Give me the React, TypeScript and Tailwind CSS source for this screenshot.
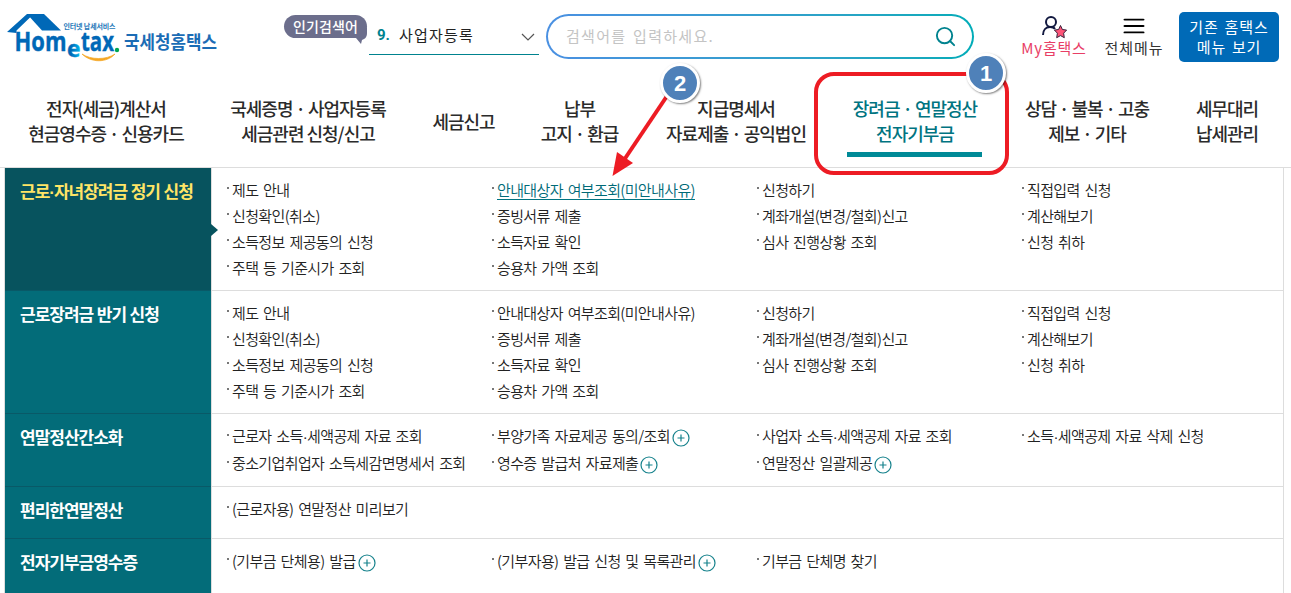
import { Menu, Search } from "lucide-react";

type MenuLink = { label: string; popup?: boolean; current?: boolean };
type MenuSection = { title: string; active?: boolean; size: string; lineHeight: string; columns: MenuLink[][] };

const navItems = [
  { lines: ["전자(세금)계산서", "현금영수증 · 신용카드"], width: "w-[212px]" },
  { lines: ["국세증명 · 사업자등록", "세금관련 신청/신고"], width: "w-48" },
  { lines: ["세금신고"], width: "w-[119px]" },
  { lines: ["납부", "고지 · 환급"], width: "w-[113px]" },
  { lines: ["지급명세서", "자료제출 · 공익법인"], width: "w-[200px]" },
  { lines: ["장려금 · 연말정산", "전자기부금"], width: "w-[158px]", active: true },
  { lines: ["상담 · 불복 · 고충", "제보 · 기타"], width: "w-[186px]" },
  { lines: ["세무대리", "납세관리"], width: "w-[94px]" },
];

const benefitColumns = (current: boolean): MenuLink[][] => [
  [
    { label: "제도 안내" },
    { label: "신청확인(취소)" },
    { label: "소득정보 제공동의 신청" },
    { label: "주택 등 기준시가 조회" },
  ],
  [
    { label: "안내대상자 여부조회(미안내사유)", current },
    { label: "증빙서류 제출" },
    { label: "소득자료 확인" },
    { label: "승용차 가액 조회" },
  ],
  [{ label: "신청하기" }, { label: "계좌개설(변경/철회)신고" }, { label: "심사 진행상황 조회" }],
  [{ label: "직접입력 신청" }, { label: "계산해보기" }, { label: "신청 취하" }],
];

const sections: MenuSection[] = [
  {
    title: "근로·자녀장려금 정기 신청",
    active: true,
    size: "h-[123px]",
    lineHeight: "h-[26px]",
    columns: benefitColumns(true),
  },
  { title: "근로장려금 반기 신청", size: "h-[123px]", lineHeight: "h-[26px]", columns: benefitColumns(false) },
  {
    title: "연말정산간소화",
    size: "h-[73px]",
    lineHeight: "h-[27px]",
    columns: [
      [{ label: "근로자 소득·세액공제 자료 조회" }, { label: "중소기업취업자 소득세감면명세서 조회" }],
      [
        { label: "부양가족 자료제공 동의/조회", popup: true },
        { label: "영수증 발급처 자료제출", popup: true },
      ],
      [{ label: "사업자 소득·세액공제 자료 조회" }, { label: "연말정산 일괄제공", popup: true }],
      [{ label: "소득·세액공제 자료 삭제 신청" }],
    ],
  },
  {
    title: "편리한연말정산",
    size: "h-[52px]",
    lineHeight: "h-[26px]",
    columns: [[{ label: "(근로자용) 연말정산 미리보기" }], [], [], []],
  },
  {
    title: "전자기부금영수증",
    size: "h-[60px]",
    lineHeight: "h-[26px]",
    columns: [
      [{ label: "(기부금 단체용) 발급", popup: true }],
      [{ label: "(기부자용) 발급 신청 및 목록관리", popup: true }],
      [{ label: "기부금 단체명 찾기" }],
      [],
    ],
  },
];

export default function App() {
  return (
    <div className="relative flex h-[593px] w-[1291px] flex-col overflow-hidden bg-white font-['Noto_Sans_CJK_KR',sans-serif] text-[#333]">
      <Header />
      <MainNav />
      <main className="mr-[7px] ml-1 flex min-h-0 flex-1 flex-col border-x border-[#ddd]">
        {sections.map((section) => (
          <SectionRow key={section.title} section={section} />
        ))}
      </main>
      <Annotations />
    </div>
  );
}

const Header = () => (
  <header className="flex h-[84px] shrink-0 items-start">
    <Logo />
    <div className="relative mt-[15px] ml-[62px] flex h-[23px] w-[83px] items-center justify-center rounded-full bg-[#6c6e8c] text-[14px] font-medium tracking-[0.1px] text-white">
      인기검색어
      <svg className="absolute right-0 bottom-[-6px]" width="14" height="17" viewBox="0 0 14 17">
        <path d="M14 0v6c0 4-2 6-5 7l-1 4-5-6z" fill="#6c6e8c" />
      </svg>
    </div>
    <div className="mt-5 ml-0.5 flex h-[35px] w-[170px] items-center border-b border-[#00838f] pr-1 pb-1 pl-2">
      <b className="font-[Roboto,sans-serif] text-[15px] text-[#00838f]">9.</b>
      <span className="ml-[9px] text-[15px] tracking-[1.2px] text-[#222]">사업자등록</span>
      <svg className="mt-1 ml-auto" width="14" height="9" viewBox="0 0 14 9" fill="none" stroke="#555" strokeWidth="1.2">
        <path d="M1 1l6 6 6-6" />
      </svg>
    </div>
    <div className="mt-3.5 ml-[7px] h-[45px] w-[428px] rounded-full bg-linear-to-r from-[#4a90e2] to-[#00acb8] p-[2px]">
      <div className="flex h-full items-center justify-between rounded-full bg-white pr-[15px] pl-[18px]">
        <span className="text-[15px] tracking-[1.3px] text-[#c4c4c4] [word-spacing:2px]">검색어를 입력하세요.</span>
        <Search className="text-[#00838f]" size={23} strokeWidth={2} />
      </div>
    </div>
    <div className="mt-[15px] ml-[46px] flex w-[68px] flex-col items-center text-[#e83e66]">
      <svg width="28" height="24" viewBox="0 0 28 24">
        <g fill="none" stroke="#11183f" strokeWidth="2">
          <circle cx="11" cy="7" r="5" />
          <path d="M3 20c0-5 3-8 7-8 2 0 4 .5 5 2" />
        </g>
        <path
          d="M20.500 10.500l1.900 4 4.200.6-3 3.100.7 4.500-3.800-2.100-3.800 2.100.7-4.500-3-3.100 4.200-.6z"
          fill="#ff5478"
          stroke="#342039"
          strokeWidth="1"
          strokeLinejoin="round"
        />
      </svg>
      <span className="-mt-0.5 text-[15px] leading-[21px] tracking-[0.8px] whitespace-nowrap">My홈택스</span>
    </div>
    <div className="mt-[15px] ml-[11px] flex w-[70px] flex-col items-center">
      <Menu className="h-[22px] w-7 text-black" preserveAspectRatio="none" strokeWidth={2} />
      <span className="text-[15px] leading-[21px] tracking-[1px] whitespace-nowrap">전체메뉴</span>
    </div>
    <button className="mt-3 ml-[10px] h-[50px] w-[100px] rounded-[5px] bg-[#006ab7] pb-px text-[15px] leading-5 tracking-[0.9px] text-white [word-spacing:1.5px]">
      기존 홈택스
      <br />
      메뉴 보기
    </button>
  </header>
);

const Logo = () => (
  <svg className="ml-[7px] shrink-0" width="215" height="70" viewBox="7 0 215 70" fontFamily="Noto Sans CJK KR, sans-serif">
    <defs>
      <linearGradient id="logo-e">
        <stop offset="0.3" stopColor="#0068b7" />
        <stop offset="1" stopColor="#00b9ef" />
      </linearGradient>
    </defs>
    <path d="M7 32L27 14h3v3.500L16.500 30.500V33z" fill="#0068b7" />
    <path d="M27 14h17l17 16.500H42z" fill="#0068b7" />
    <text x="63.500" y="29" fontSize="7" fontWeight="700" fill="#2578b9" textLength="52">
      인터넷 납세서비스
    </text>
    <g fontFamily="Open Sans, sans-serif" fontWeight="700" fill="#0068b7" stroke="#0068b7" strokeWidth=".4" fontSize="27">
      <text x="14.500" y="51" textLength="52" lengthAdjust="spacingAndGlyphs">
        Hom
      </text>
      <text x="67" y="56.500" fontSize="23" fill="url(#logo-e)" stroke="url(#logo-e)" textLength="13.500" lengthAdjust="spacingAndGlyphs">
        e
      </text>
      <text x="81" y="51" textLength="33" lengthAdjust="spacingAndGlyphs">
        tax
      </text>
    </g>
    <circle cx="117" cy="50" r="2.200" fill="#00a651" />
    <path d="M82 54c9 9 25 9 33 0-9 6-24 6-33 0z" fill="#f5a623" stroke="#f5a623" strokeWidth=".7" />
    <text x="124" y="49" fontSize="18" fontWeight="700" fill="#1b6cb5" textLength="93" lengthAdjust="spacingAndGlyphs">
      국세청홈택스
    </text>
  </svg>
);

const MainNav = () => (
  <nav className="flex h-[84px] shrink-0 border-b border-[#ddd]">
    {navItems.map(({ lines, width, active }) => (
      <a
        key={lines[0]}
        className={`${width} ${
          active ? "text-[#007481]" : "text-[#2b2b2b]"
        } flex shrink-0 flex-col items-center pt-3 text-center text-[18px] leading-[25px] font-medium tracking-[-1px] whitespace-nowrap`}
      >
        <span className="flex h-[50px] flex-col justify-center">
          {lines.map((line) => (
            <span key={line}>{line}</span>
          ))}
        </span>
        {active && <span className="mt-1.5 mr-0.5 h-[5px] w-[135px] bg-[#008a97]" />}
      </a>
    ))}
  </nav>
);

const SectionRow = ({ section }: { section: MenuSection }) => (
  <section className={`${section.size} flex shrink-0`}>
    <h2
      className={`${
        section.active ? "bg-[#07535e] text-[#ffe566]" : "bg-[#036c79] text-white"
      } relative w-[206px] shrink-0 border-b border-[#095967] pt-2.5 pl-[15px] text-[17px] leading-[26px] font-bold tracking-[-1px] whitespace-nowrap [word-spacing:0.7px]`}
    >
      <TightDot text={section.title} />
      {section.active && (
        <span className="absolute top-14 -right-[7px] h-3 w-[7px] bg-[#07535e] [clip-path:polygon(0_0,100%_50%,0_100%)]" />
      )}
    </h2>
    <div className="flex min-w-0 flex-1 border-b border-l border-[#ddd] pt-[9px] pl-[15px]">
      {section.columns.map((links, i) => (
        <ul
          key={i}
          className="w-[265px] shrink-0 text-[15px] font-[350] tracking-[-0.62px] whitespace-nowrap text-[#222] [word-spacing:2px] last:w-[240px]"
        >
          {links.map((link) => (
            <li key={link.label} className={`${section.lineHeight} flex items-center`}>
              <span className="mr-[3px] mb-1 h-0.5 w-0.5 bg-[#777]" />
              <a className={link.current ? "border-b border-[#007481] leading-[19px] text-[#006a77]" : ""}>
                <TightDot text={link.label} />
              </a>
              {link.popup && <PopupIcon />}
            </li>
          ))}
        </ul>
      ))}
    </div>
  </section>
);

// The CJK middle dot is set too wide for compound words like 소득·세액, so take the Latin one
const TightDot = ({ text }: { text: string }) => {
  const [head, tail] = text.split("·");
  if (!tail) return <>{text}</>;
  return (
    <>
      {head}
      <span className="font-['Liberation_Sans',sans-serif] leading-none">·</span>
      {tail}
    </>
  );
};

const PopupIcon = () => (
  <svg className="mt-[3px] ml-0.5" width="18" height="18" viewBox="0 0 18 18" fill="none" stroke="#16828c" strokeWidth="1.2">
    <circle cx="9" cy="9" r="8" />
    <path d="M9 5.5v7M5.5 9h7" />
  </svg>
);

// Numbered steps and the arrow laid over the menu
const Annotations = () => (
  <>
    <div className="absolute top-[72px] left-[814px] h-[103px] w-[195px] rounded-[20px] border-4 border-[#ed1c24]" />
    <svg className="absolute top-[90px] left-[605px]" width="70" height="90" viewBox="605 90 70 90">
      <path d="M667 96L624 160" stroke="#ed1c24" strokeWidth="4" />
      <path d="M612.5 176l4.5-24 16 11z" fill="#ed1c24" />
    </svg>
    <StepBadge step={1} position="top-[53px] left-[966px]" />
    <StepBadge step={2} position="top-[63px] left-[660px]" />
  </>
);

const StepBadge = ({ step, position }: { step: number; position: string }) => (
  <div
    className={`${position} absolute flex h-10 w-10 items-center justify-center rounded-full border-[3px] border-white bg-[#4f81b9] font-['Liberation_Sans',sans-serif] text-[22px] font-bold text-white shadow-[1px_1px_2px_rgba(0,0,0,0.5)]`}
  >
    {step}
  </div>
);
